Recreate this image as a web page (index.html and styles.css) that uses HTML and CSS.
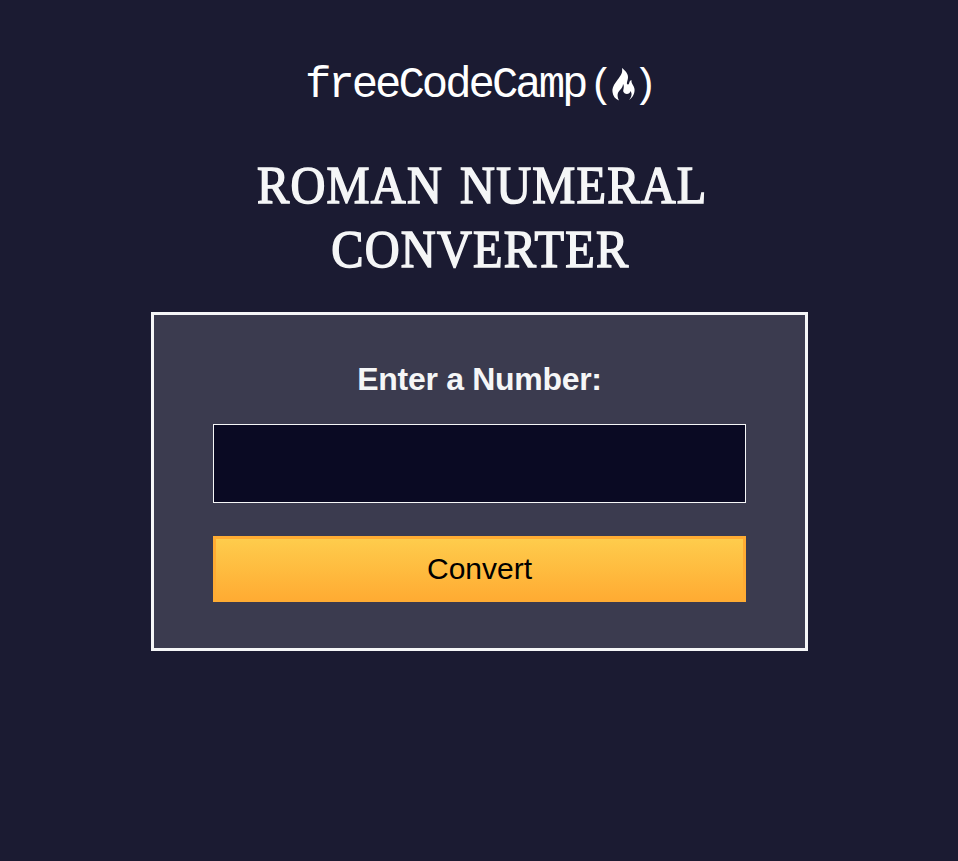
FILE: index.html
```html
<!DOCTYPE html>
<html lang="en">
<head>
<meta charset="UTF-8">
<title>Roman Numeral Converter</title>
<link rel="stylesheet" href="styles.css">
</head>
<body>
<main>
<svg class="logo" viewBox="0 0 350 48" role="img" aria-label="freeCodeCamp">
<text class="wordmark" x="0" y="36.5" textLength="283.5" lengthAdjust="spacing">freeCodeCamp</text>
<text class="paren" x="284" y="37">(</text>
<path fill="#fff" d="M317 8C318 14 315 16 311 22C308 26 307 29 307.500 32C308 36 310 39 314 40.500C312 36 312 33 315 30C317 28 318 26 318 24C320 27 317.500 30 318.500 32C320 35 325 34.500 325.500 31C327.500 34 326.500 37 324 40C328 37.500 330 33 329.500 29C329 25 326 24 326.500 20C323.500 21 325 24 323 24.500C320.500 24 323 21 323 17C323 13 319.500 10 317 8Z"/>
<text class="paren" x="328" y="37">)</text>
</svg>
<h1><span class="top">Roman Numeral</span><span class="bottom">Converter</span></h1>
<form class="converter">
<label for="number">Enter a Number:</label>
<input id="number" type="number">
<button type="button">Convert</button>
</form>
</main>
</body>
</html>
```
FILE: styles.css
```css
* { box-sizing: border-box; }
body {
  margin: 0;
  min-height: 100vh;
  background: #1b1b32;
  color: #f5f6f7;
  font-family: "Liberation Sans", Arial, sans-serif;
}
main {
  display: flex;
  flex-direction: column;
  align-items: center;
  padding-top: 60px;
}
.logo { width: 350px; height: 48px; margin-left: 2px; overflow: visible; }
.logo text { fill: #fff; font-family: "Liberation Mono", monospace; }
.wordmark { font-size: 44px; }
.paren { font-size: 41px; }
h1 {
  margin: 46px 0 0;
  font-family: "Liberation Serif", "Times New Roman", serif;
  font-size: 52px;
  font-weight: 400;
  line-height: 64px;
  text-align: center;
  text-transform: uppercase;
  -webkit-text-stroke: 1.5px #f5f6f7;
}
h1 span { display: block; letter-spacing: 1.3px; }
.top { word-spacing: 4px; transform: translateX(3px) scaleX(0.93); }
.bottom { transform: translateX(1px) scaleX(0.93); }
.converter {
  display: flex;
  flex-direction: column;
  align-items: center;
  width: 657px;
  height: 339px;
  margin: 30px 0 0 1px;
  padding: 46px 59px 0;
  border: 3px solid #f5f6f7;
  background: #3b3b4f;
}
label { font-size: 32px; font-weight: 700; line-height: 37px; letter-spacing: -0.3px; }
input {
  width: 533px;
  height: 79px;
  margin: 26px 0 33px;
  border: 1px solid #f5f6f7;
  border-radius: 0;
  background: #0a0a23;
  color: #f5f6f7;
  font: 32px "Liberation Sans", Arial, sans-serif;
  text-align: center;
}
button {
  width: 533px;
  height: 66px;
  padding: 0;
  border: 3px solid #ffac33;
  background: linear-gradient(#fecc4c, #ffac33);
  color: #000;
  font: 30px "Liberation Sans", Arial, sans-serif;
}
```
